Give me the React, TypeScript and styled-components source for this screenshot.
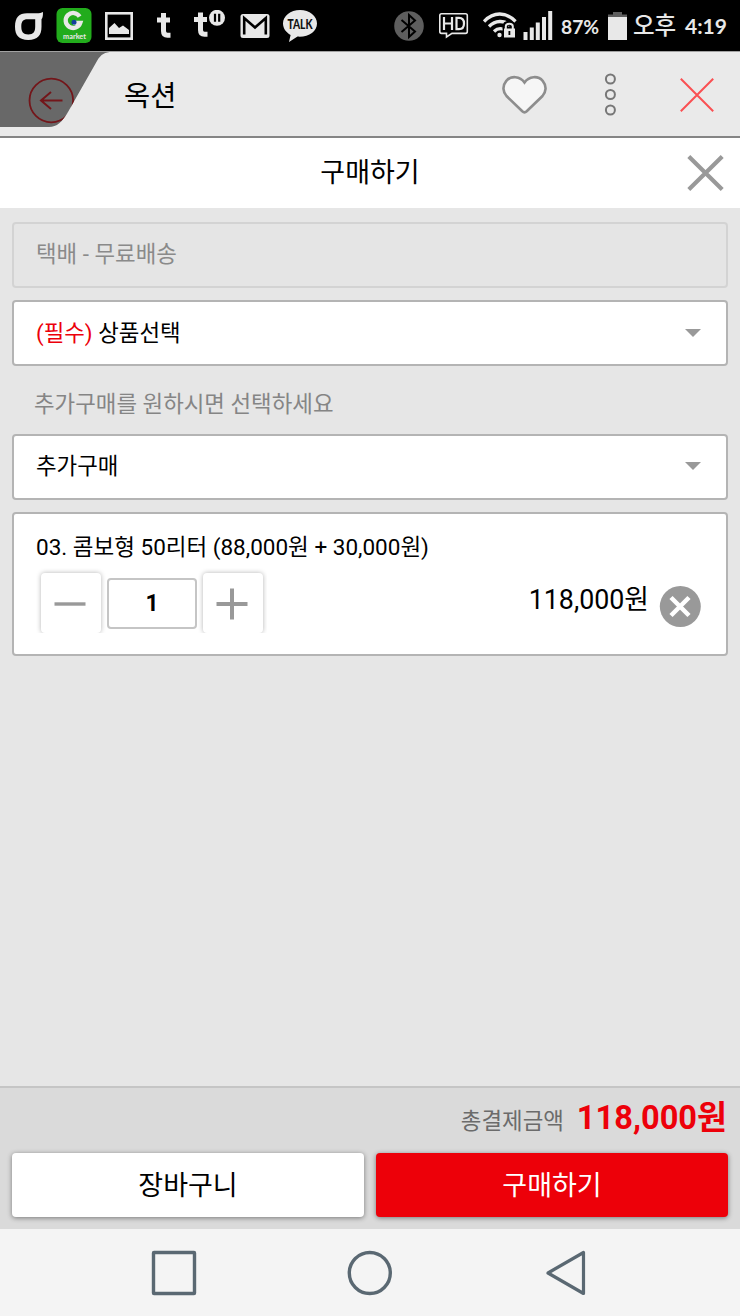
import React from "react";
import styled, { createGlobalStyle } from "styled-components";

const sans = `Roboto, "Noto Sans CJK KR", "Noto Sans", sans-serif`;

const GlobalStyle = createGlobalStyle`
  *, *::before, *::after { box-sizing: border-box; }
  body { margin: 0; background: #e6e6e6; font-family: ${sans}; color: #000; }
  button { font: inherit; color: inherit; border: 0; padding: 0; background: none; cursor: pointer; }
  svg { display: block; flex: none; }
`;

const Screen = styled.div`
  width: 740px;
  height: 1316px;
  display: flex;
  flex-direction: column;
  overflow: hidden;
`;

const StatusBar = styled.div`
  flex: none;
  height: 51px;
  display: flex;
  background: #000;
  color: #e8e8e8;
`;

const StatusItem = styled.div<{ $left: number; $top: number }>`
  flex: none;
  margin-left: ${(p) => p.$left}px;
  padding-top: ${(p) => p.$top}px;
`;

const StatusText = styled.span<{ $size: number; $width: number; $weight?: number }>`
  display: block;
  width: ${(p) => p.$width}px;
  font: ${(p) => p.$weight ?? 500} ${(p) => p.$size}px/30px Lato, "Noto Sans CJK KR", sans-serif;
  white-space: nowrap;
`;

const Header = styled.header`
  flex: none;
  height: 87px;
  display: flex;
  background: #eaeaea;
  border-top: 1px solid #a2a2a2;
  border-bottom: 2px solid #858585;
`;

const BackTab = styled.button`
  width: 112px;
  height: 76px;
`;

const AppTitle = styled.h1`
  flex: 1;
  margin: 0;
  padding: 25px 0 0 12px;
  font-size: 28.5px;
  line-height: 40px;
  font-weight: 400;
`;

const HeaderButton = styled.button<{ $right: number; $top: number }>`
  align-self: flex-start;
  margin: ${(p) => p.$top}px ${(p) => p.$right}px 0 0;
`;

const SheetHeader = styled.div`
  flex: none;
  height: 70px;
  display: grid;
  grid-template-columns: 60px 1fr 60px;
  background: #fff;
`;

const SheetTitle = styled.h2`
  grid-column: 2;
  margin: 0;
  padding-top: 15px;
  text-align: center;
  font-size: 27px;
  line-height: 40px;
  font-weight: 400;
`;

const SheetClose = styled.button`
  justify-self: start;
  align-self: start;
  margin: 17px 0 0 7px;
`;

const Body = styled.main`
  flex: 1;
  min-height: 0;
  padding: 14px 12px 0;
  display: flex;
  flex-direction: column;
`;

const Field = styled.div<{ $disabled?: boolean; $top: number }>`
  flex: none;
  height: 66px;
  display: flex;
  justify-content: space-between;
  align-items: flex-start;
  padding: ${(p) => p.$top}px 25px 0 22px;
  border: 2px solid ${(p) => (p.$disabled ? "#d3d3d3" : "#b4b4b4")};
  border-radius: 4px;
  background: ${(p) => (p.$disabled ? "#e5e5e5" : "#fff")};
  color: ${(p) => (p.$disabled ? "#8a8a8a" : "#000")};
  font-size: 22.4px;
  line-height: 30px;
  margin-bottom: 12px;
`;

const Required = styled.span`
  color: #ec000b;
`;

const Arrow = styled.span`
  margin-top: 11px;
  border: 8px solid transparent;
  border-top-color: #999;
  border-bottom: 0;
`;

const Hint = styled.p`
  flex: none;
  height: 56px;
  margin: 0;
  padding: 11px 0 0 22px;
  color: #858585;
  font-size: 22.4px;
  line-height: 30px;
`;

const Card = styled.section`
  flex: none;
  height: 144px;
  padding: 18px 25px 0 22px;
  border: 2px solid #b4b4b4;
  border-radius: 4px;
  background: #fff;
`;

const OptionName = styled.div`
  font-size: 22.5px;
  line-height: 30px;
`;

const OptionRow = styled.div`
  display: flex;
  height: 71px;
  align-items: flex-start;
`;

const Stepper = styled.div`
  display: flex;
  align-items: flex-start;
  height: 71px;
  padding: 11px 4px 0 5px;
  overflow: hidden;
`;

const StepButton = styled.button`
  width: 60px;
  height: 60px;
  display: grid;
  place-items: center;
  padding: 2px 2px 0 0;
  border-radius: 4px;
  background: #fff;
  box-shadow: 0 0 5px rgba(0, 0, 0, 0.3);
`;

const Quantity = styled.div`
  width: 90px;
  height: 51px;
  margin: 5px 6px 0;
  border: 2px solid #c5c5c5;
  border-radius: 4px;
  text-align: center;
  font-size: 23px;
  line-height: 47px;
  font-weight: 700;
`;

const Price = styled.div`
  margin-left: auto;
  padding-top: 18px;
  font-size: 26.8px;
  line-height: 40px;
`;

const RemoveButton = styled.button`
  margin: 24px 0 0 10px;
`;

const Summary = styled.footer`
  flex: none;
  height: 143px;
  border-top: 2px solid #c5c5c5;
  background: #dadada;
`;

const Total = styled.div`
  height: 65px;
  display: flex;
  justify-content: flex-end;
  align-items: baseline;
  padding: 7px 13px 0 0;
  line-height: 46px;
`;

const TotalLabel = styled.span`
  margin-right: 13px;
  color: #6b6b6b;
  font-size: 22.4px;
`;

const TotalAmount = styled.strong`
  color: #ed000a;
  font-size: 32.6px;
  font-weight: 700;
`;

const Actions = styled.div`
  display: grid;
  grid-template-columns: 1fr 1fr;
  gap: 12px;
  padding: 0 12px;
`;

const ActionButton = styled.button<{ $primary?: boolean }>`
  height: 64px;
  padding-top: 2px;
  border-radius: 4px;
  background: ${(p) => (p.$primary ? "#ed0009" : "#fff")};
  color: ${(p) => (p.$primary ? "#fff" : "#000")};
  box-shadow: 0 1px 5px rgba(0, 0, 0, 0.45);
  font-size: 27px;
  line-height: 40px;
`;

const NavBar = styled.nav`
  flex: none;
  height: 87px;
  display: flex;
  align-items: flex-start;
  padding: 21px 0 0 151px;
  gap: 150px;
  background: #f4f4f4;
`;

const fg = "#e8e8e8";

export default function App() {
  return (
    <Screen>
      <GlobalStyle />
      <StatusBar>
        <StatusItem $left={15} $top={12}>
          <svg width="28" height="28" viewBox="0 0 28 28">
            <path d="M28 0c-1.500 1-3.500 1.300-6.500 1.300H12C4 1.300 0 5.500 0 14.600S4 28 13.300 28s13.200-4.300 13.200-13.400V7.200Q28 6 28 0ZM12.500 7.300h7.700v7.300c0 5.300-1.700 8-6.900 8s-7-2.700-7-8 1.700-7.300 6.200-7.300Z" fill={fg} fillRule="evenodd" />
          </svg>
        </StatusItem>
        <StatusItem $left={13} $top={8}>
          <svg width="36" height="36" viewBox="0 0 36 36">
            <rect x=".5" y="0" width="35" height="35" rx="6" fill="#22ac1c" />
            <path d="M23.600 8.600A7.500 7.500 0 1 0 24.300 14.800H17" fill="none" stroke={fg} strokeWidth="4.300" />
            <circle cx="18" cy="14.300" r="2.500" fill="#123f9c" />
            <text x="18.500" y="30.800" textAnchor="middle" textLength="23" lengthAdjust="spacingAndGlyphs" fontFamily="Lato, sans-serif" fontWeight="700" fontSize="7" fill={fg}>market</text>
          </svg>
        </StatusItem>
        <StatusItem $left={13} $top={12}>
          <svg width="28" height="28" viewBox="0 0 28 28">
            <rect x="1.300" y="1.300" width="25.400" height="25.400" fill="none" stroke={fg} strokeWidth="2.600" />
            <path d="M4 22v-6l5.500-5 4.500 5 4-2.500L24 18v4Z" fill={fg} />
          </svg>
        </StatusItem>
        <StatusItem $left={24} $top={13}>
          <svg width="15" height="26" viewBox="0 0 15 26">
            <path d="M6.500 0v18q0 4.300 4 4.300h3M0 7h13" fill="none" stroke={fg} strokeWidth="5" />
          </svg>
        </StatusItem>
        <StatusItem $left={22} $top={10}>
          <svg width="32" height="28" viewBox="0 0 32 28">
            <path d="M6.500 2.500V20q0 4.300 4 4.300h3M0 9.500h13" fill="none" stroke={fg} strokeWidth="5" />
            <circle cx="23" cy="7.800" r="8" fill={fg} />
            <path d="M21 3.800v8M25.200 3.800v8" stroke="#000" strokeWidth="2.200" />
          </svg>
        </StatusItem>
        <StatusItem $left={14} $top={14}>
          <svg width="30" height="24" viewBox="0 0 30 24">
            <rect x=".5" width="29" height="24" rx="2.500" fill={fg} />
            <path d="M4.200 20.500V4L15 13.500 25.800 4v16.500" fill="none" stroke="#000" strokeWidth="2.600" />
            <path d="M6 0h18l-9 8Z" fill={fg} />
          </svg>
        </StatusItem>
        <StatusItem $left={13} $top={10}>
          <svg width="34" height="32" viewBox="0 0 34 32">
            <path d="M17 0C7.500 0 0 6 0 13.500c0 5 3.200 9 7.600 11.400L6 32l8.500-5.400c11 .8 19.500-5 19.500-13.100C34 6 26.500 0 17 0Z" fill={fg} />
            <text x="17" y="18.500" textAnchor="middle" textLength="25" lengthAdjust="spacingAndGlyphs" fontFamily="Lato, sans-serif" fontWeight="900" fontSize="12.500" fill="#111">TALK</text>
          </svg>
        </StatusItem>
        <StatusItem $left={77} $top={11}>
          <svg width="30" height="30" viewBox="0 0 30 30">
            <circle cx="15" cy="15" r="14.800" fill="#5e5e5e" />
            <path d="M7.500 9 21 20.500 15 26V4l6 5.500L7.500 21" fill="none" stroke="#000" strokeWidth="2" />
          </svg>
        </StatusItem>
        <StatusItem $left={15} $top={13}>
          <svg width="30" height="26" viewBox="0 0 30 26">
            <path d="M2.500.8h24q1.800 0 1.800 1.800v16q0 1.800-1.800 1.800H13L7.500 24v-3.600h-5Q.8 20.400.8 18.600v-16Q.8.800 2.500.8Z" fill="none" stroke={fg} strokeWidth="1.600" />
            <path d="M5 4v13M13 4v13M5 10.500h8M17.500 4.900H20q5 0 5 5.600t-5 5.600h-2.500Z" fill="none" stroke={fg} strokeWidth="2.200" />
          </svg>
        </StatusItem>
        <StatusItem $left={14} $top={11}>
          <svg width="34" height="28" viewBox="0 0 34 28">
            <path d="M1 10.500C10.500.5 23 .5 32.500 10.500M6 15.500c6.500-6.500 15-6.500 21-1M11 20.500c3-3 6-3.500 9-2.500" fill="none" stroke={fg} strokeWidth="3.300" />
            <circle cx="16.500" cy="24" r="2.200" fill={fg} />
            <path d="M22 18.500v-2.700q0-3.600 4-3.600t4 3.600v2.700" fill="none" stroke="#000" strokeWidth="5" />
            <rect x="20.500" y="17" width="12" height="10" fill={fg} stroke="#000" strokeWidth="1" />
            <path d="M22.800 18v-2.700q0-2.600 3.500-2.600t3.500 2.600V18" fill="none" stroke={fg} strokeWidth="2" />
            <path d="M26.400 20v4" stroke="#000" strokeWidth="1.800" />
          </svg>
        </StatusItem>
        <StatusItem $left={6} $top={11}>
          <svg width="30" height="29" viewBox="0 0 30 29">
            <path d="M2.500 29v-8M8.800 29V16.500M14.800 29V11.500M21 29V6M27.200 29V0" stroke={fg} strokeWidth="4" />
          </svg>
        </StatusItem>
        <StatusItem $left={8} $top={12}>
          <StatusText $size={19.3} $width={38} $weight={700}>87%</StatusText>
        </StatusItem>
        <StatusItem $left={9} $top={11}>
          <svg width="19" height="29" viewBox="0 0 19 29">
            <path d="M5 1h9v2.500h5V7H0V3.500h5Z" fill="#5e5e5e" />
            <path d="M0 6h19v23H0Z" fill={fg} />
          </svg>
        </StatusItem>
        <StatusItem $left={6} $top={10}>
          <StatusText $size={23.5} $width={47}>오후</StatusText>
        </StatusItem>
        <StatusItem $left={5} $top={11}>
          <StatusText $size={21} $width={42} $weight={700}>4:19</StatusText>
        </StatusItem>
      </StatusBar>

      <Header>
        <BackTab aria-label="뒤로">
          <svg width="112" height="76" viewBox="0 0 112 76">
            <defs>
              <clipPath id="tab">
                <path d="M0 0h112c-7 0-11 2-15 9L68 60C62 70 57 75 49 75H0Z" />
              </clipPath>
            </defs>
            <g clipPath="url(#tab)">
              <path d="M0 0h112v76H0Z" fill="#686868" />
              <circle cx="51.300" cy="48.500" r="21.800" fill="none" stroke="#73161a" strokeWidth="1.800" />
              <path d="M62.500 48.500H41M51 40l-10 8.500L51 57" fill="none" stroke="#73161a" strokeWidth="2" />
            </g>
          </svg>
        </BackTab>
        <AppTitle>옥션</AppTitle>
        <HeaderButton $right={57} $top={23} aria-label="찜">
          <svg width="45" height="40" viewBox="0 0 45 40">
            <path d="M22.500 7.500C18 1 9 .4 4.300 5.800 0 11 1 17 4.500 21l15.800 15.300q2.200 2 4.400 0L40.500 21c3.500-4 4.500-10 .2-15.200C36 .4 27 1 22.500 7.500Z" fill="#f6f6f6" stroke="#8d8d8d" strokeWidth="2.600" />
          </svg>
        </HeaderButton>
        <HeaderButton $right={64} $top={21} aria-label="더보기">
          <svg width="12" height="44" viewBox="0 0 12 44" fill="none" stroke="#777" strokeWidth="2">
            <circle cx="6.400" cy="6" r="4.500" />
            <circle cx="6.400" cy="21.500" r="4.500" />
            <circle cx="6.400" cy="37" r="4.500" />
          </svg>
        </HeaderButton>
        <HeaderButton $right={26} $top={26} aria-label="창 닫기">
          <svg width="34" height="34" viewBox="0 0 34 34">
            <path d="m.8.800 32.400 32.400m0-32.400L.8 33.200" stroke="#fa5053" strokeWidth="2" />
          </svg>
        </HeaderButton>
      </Header>

      <SheetHeader>
        <SheetTitle>구매하기</SheetTitle>
        <SheetClose aria-label="닫기">
          <svg width="37" height="36" viewBox="0 0 37 36">
            <path d="m1.800 1.500 33.400 33m0-33-33.400 33" stroke="#999" strokeWidth="4.200" />
          </svg>
        </SheetClose>
      </SheetHeader>

      <Body>
        <Field $disabled $top={15}>택배 - 무료배송</Field>
        <Field $top={16}>
          <span><Required>(필수)</Required> 상품선택</span>
          <Arrow />
        </Field>
        <Hint>추가구매를 원하시면 선택하세요</Hint>
        <Field $top={15}>
          추가구매
          <Arrow />
        </Field>
        <Card>
          <OptionName>03. 콤보형 50리터 (88,000원 + 30,000원)</OptionName>
          <OptionRow>
            <Stepper>
              <StepButton aria-label="수량 감소">
                <svg width="32" height="32" viewBox="0 0 32 32">
                  <path d="M.5 16h31" stroke="#999" strokeWidth="3.400" />
                </svg>
              </StepButton>
              <Quantity>1</Quantity>
              <StepButton aria-label="수량 증가">
                <svg width="32" height="32" viewBox="0 0 32 32">
                  <path d="M.5 16h31M16 .5v31" stroke="#999" strokeWidth="4" />
                </svg>
              </StepButton>
            </Stepper>
            <Price>118,000원</Price>
            <RemoveButton aria-label="삭제">
              <svg width="42" height="42" viewBox="0 0 42 42">
                <circle cx="21.300" cy="20.500" r="20.500" fill="#999" />
                <path d="m12 11.500 18 18m0-18-18 18" stroke="#fff" strokeWidth="4.500" />
              </svg>
            </RemoveButton>
          </OptionRow>
        </Card>
      </Body>

      <Summary>
        <Total>
          <TotalLabel>총결제금액</TotalLabel>
          <TotalAmount>118,000원</TotalAmount>
        </Total>
        <Actions>
          <ActionButton>장바구니</ActionButton>
          <ActionButton $primary>구매하기</ActionButton>
        </Actions>
      </Summary>

      <NavBar>
        <svg width="46" height="46" viewBox="0 0 46 46">
          <rect x="2.500" y="2.500" width="41" height="41" rx=".5" fill="none" stroke="#5a6872" strokeWidth="3.400" />
        </svg>
        <svg width="46" height="46" viewBox="0 0 46 46">
          <circle cx="22.800" cy="23" r="20.500" fill="none" stroke="#5a6872" strokeWidth="3.400" />
        </svg>
        <svg width="46" height="46" viewBox="0 0 46 46">
          <path d="M5 23 40.500 2.500v41Z" fill="none" stroke="#5a6872" strokeWidth="3.200" strokeLinejoin="round" />
        </svg>
      </NavBar>
    </Screen>
  );
}
